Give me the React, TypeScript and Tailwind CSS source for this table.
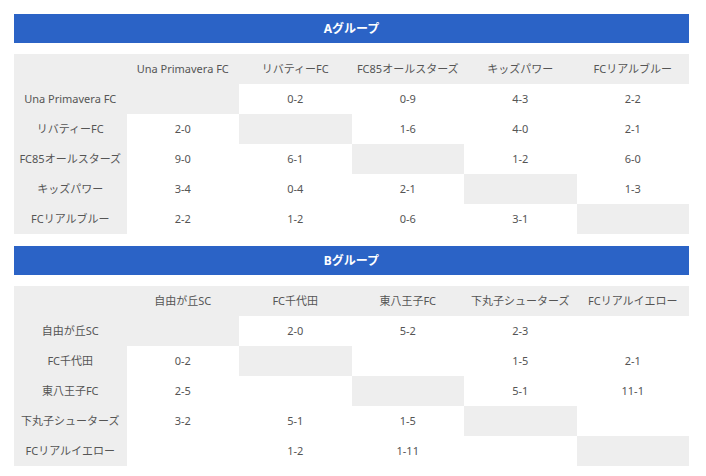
const groups = [
  {
    title: "Aグループ",
    teams: ["Una Primavera FC", "リバティーFC", "FC85オールスターズ", "キッズパワー", "FCリアルブルー"],
    results: [
      ["", "0-2", "0-9", "4-3", "2-2"],
      ["2-0", "", "1-6", "4-0", "2-1"],
      ["9-0", "6-1", "", "1-2", "6-0"],
      ["3-4", "0-4", "2-1", "", "1-3"],
      ["2-2", "1-2", "0-6", "3-1", ""],
    ],
  },
  {
    title: "Bグループ",
    teams: ["自由が丘SC", "FC千代田", "東八王子FC", "下丸子シューターズ", "FCリアルイエロー"],
    results: [
      ["", "2-0", "5-2", "2-3", ""],
      ["0-2", "", "", "1-5", "2-1"],
      ["2-5", "", "", "5-1", "11-1"],
      ["3-2", "5-1", "1-5", "", ""],
      ["", "1-2", "1-11", "", ""],
    ],
  },
];

function GroupTable({ title, teams, results }: (typeof groups)[number]) {
  return (
    <section>
      <h2 className="h-[29px] bg-[#2b63c6] text-white text-[12px] font-bold flex items-center justify-center">
        {title}
      </h2>
      <table className="mt-[11px] w-full table-fixed border-collapse text-[11px] text-[#555]">
        <thead>
          <tr className="bg-[#eeeeee] h-[30px]">
            <th className="font-normal" />
            {teams.map((t) => (
              <th key={t} className="font-normal whitespace-nowrap">
                {t}
              </th>
            ))}
          </tr>
        </thead>
        <tbody>
          {results.map((row, i) => (
            <tr key={teams[i]} className="h-[30px]">
              <td className="bg-[#eeeeee] text-center whitespace-nowrap">{teams[i]}</td>
              {row.map((r, j) => (
                <td key={j} className={i === j ? "bg-[#eeeeee] text-center" : "text-center"}>
                  {r}
                </td>
              ))}
            </tr>
          ))}
        </tbody>
      </table>
    </section>
  );
}

export default function App() {
  return (
    <div
      className="bg-white w-[706px] h-[476px] pl-[14px] pr-[17px] pt-[14px] flex flex-col gap-[12px]"
      style={{ fontFamily: '"Noto Sans", "Noto Sans CJK JP", sans-serif' }}
    >
      {groups.map((g) => (
        <GroupTable key={g.title} {...g} />
      ))}
    </div>
  );
}
